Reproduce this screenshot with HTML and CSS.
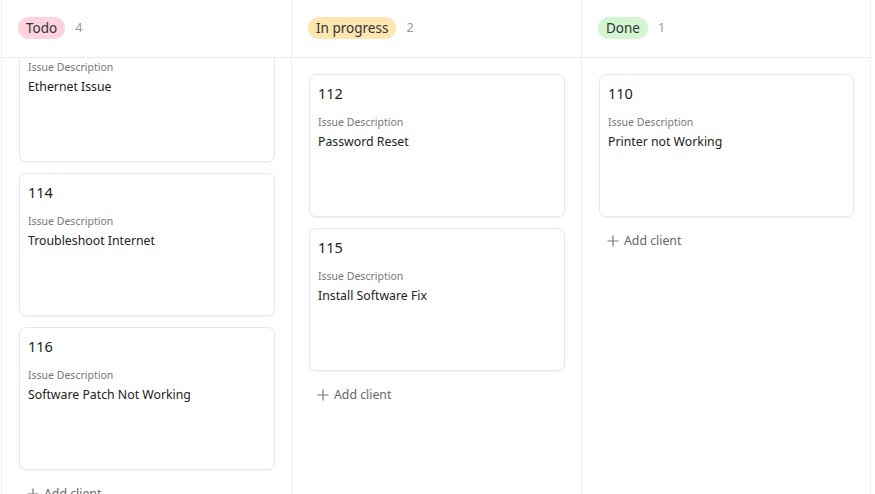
FILE: index.html
```html
<!DOCTYPE html>
<html lang="en">
<head>
    <meta charset="UTF-8">
    <meta name="viewport" content="width=device-width, initial-scale=1.0">
    <title>Issue Board</title>
    <link rel="stylesheet" href="styles.css">
</head>
<body>
    <div class="board">
        <!-- Todo -->
        <div class="column">
            <div class="column-header">
                <span class="badge badge-todo">Todo</span>
                <span class="count">4</span>
            </div>
            <div class="column-body">
                <div class="card-list scrolled">
                    <div class="card">
                        <div class="card-id">113</div>
                        <div class="card-label">Issue Description</div>
                        <div class="card-text">Ethernet Issue</div>
                    </div>
                    <div class="card">
                        <div class="card-id">114</div>
                        <div class="card-label">Issue Description</div>
                        <div class="card-text">Troubleshoot Internet</div>
                    </div>
                    <div class="card">
                        <div class="card-id">116</div>
                        <div class="card-label">Issue Description</div>
                        <div class="card-text">Software Patch Not Working</div>
                    </div>
                    <a class="add-client">
                        <svg class="plus" width="12" height="12" viewBox="0 0 12 12"><path d="M6 0.5v11M0.5 6h11" stroke="#777" stroke-width="1.2" fill="none"/></svg>
                        Add client
                    </a>
                </div>
            </div>
        </div>

        <!-- In progress -->
        <div class="column">
            <div class="column-header">
                <span class="badge badge-progress">In progress</span>
                <span class="count">2</span>
            </div>
            <div class="column-body">
                <div class="card-list">
                    <div class="card">
                        <div class="card-id">112</div>
                        <div class="card-label">Issue Description</div>
                        <div class="card-text">Password Reset</div>
                    </div>
                    <div class="card">
                        <div class="card-id">115</div>
                        <div class="card-label">Issue Description</div>
                        <div class="card-text">Install Software Fix</div>
                    </div>
                    <a class="add-client">
                        <svg class="plus" width="12" height="12" viewBox="0 0 12 12"><path d="M6 0.5v11M0.5 6h11" stroke="#777" stroke-width="1.2" fill="none"/></svg>
                        Add client
                    </a>
                </div>
            </div>
        </div>

        <!-- Done -->
        <div class="column">
            <div class="column-header">
                <span class="badge badge-done">Done</span>
                <span class="count">1</span>
            </div>
            <div class="column-body">
                <div class="card-list">
                    <div class="card">
                        <div class="card-id">110</div>
                        <div class="card-label">Issue Description</div>
                        <div class="card-text">Printer not Working</div>
                    </div>
                    <a class="add-client">
                        <svg class="plus" width="12" height="12" viewBox="0 0 12 12"><path d="M6 0.5v11M0.5 6h11" stroke="#777" stroke-width="1.2" fill="none"/></svg>
                        Add client
                    </a>
                </div>
            </div>
        </div>
    </div>
</body>
</html>
```

FILE: styles.css
```css
body {
    font-family: "Noto Sans", "Open Sans", Arial, sans-serif;
    background-color: #fff;
    color: #222;
    margin: 0;
    padding: 0;
}
.board {
    display: flex;
    height: 494px;
    padding-left: 1px;
}
.column {
    width: 290px;
    box-sizing: border-box;
    border-left: 1px solid #efefef;
    display: flex;
    flex-direction: column;
}
.column:last-child {
    border-right: 1px solid #efefef;
}
.column-header {
    height: 58px;
    box-sizing: border-box;
    border-bottom: 1px solid #e9e9e9;
    display: flex;
    align-items: center;
    gap: 10px;
    padding-left: 16px;
    padding-bottom: 2px;
}
.badge {
    font-size: 13.5px;
    line-height: 22px;
    padding: 0 8px;
    border-radius: 11px;
    color: #333;
}
.badge-todo {
    background: #fdd3de;
}
.badge-progress {
    background: #fde6b0;
}
.badge-done {
    background: #d2f5d2;
}
.count {
    font-size: 12.5px;
    color: #999;
}
.column-body {
    flex: 1;
    overflow: hidden;
    padding: 16px 16px 0 17px;
}
.card-list {
    display: flex;
    flex-direction: column;
    gap: 11px;
}
.scrolled {
    margin-top: -55px;
}
.card {
    height: 143px;
    box-sizing: border-box;
    border: 1px solid #e8e8e8;
    border-radius: 7px;
    box-shadow: 0 1px 2px rgba(0, 0, 0, 0.06);
    padding: 8px 8px;
}
.card-id {
    font-size: 14.5px;
    line-height: 20px;
    color: #222;
}
.card-label {
    font-size: 10.5px;
    line-height: 16px;
    color: #777;
    margin-top: 11px;
}
.card-text {
    font-size: 12.3px;
    line-height: 20px;
    color: #222;
    margin-top: 2px;
}
.add-client {
    display: flex;
    align-items: center;
    gap: 5px;
    font-size: 12.3px;
    line-height: 20px;
    color: #666;
    padding-left: 8px;
    margin-top: 3px;
    cursor: pointer;
}
.plus {
    flex: none;
}
```
